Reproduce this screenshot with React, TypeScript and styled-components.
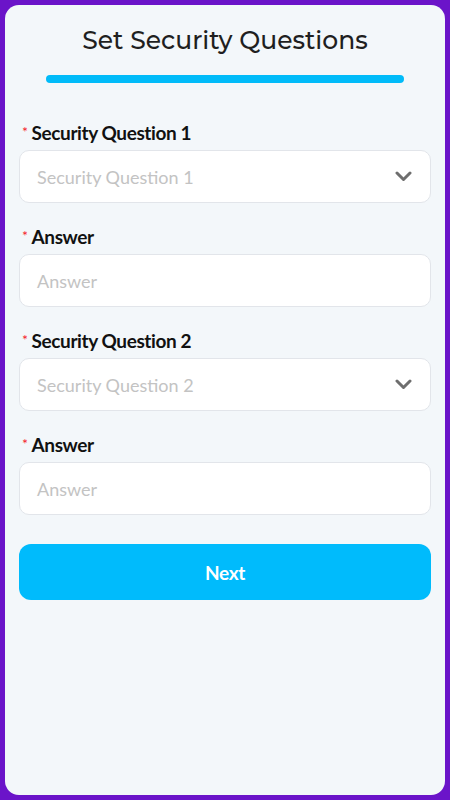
import React from "react";
import styled, { createGlobalStyle } from "styled-components";

const Global = createGlobalStyle`
  html, body { margin: 0; padding: 0; background: #6b14c9; }
  body { font-family: "Lato", "Noto Sans", sans-serif; }
  * { box-sizing: border-box; }
`;

const Frame = styled.div`
  width: 450px;
  height: 800px;
  padding: 5px;
  background: #6b14c9;
`;

const Card = styled.div`
  height: 790px;
  background: #f3f7fa;
  border-radius: 14px;
  padding: 21px 14px 0;
  display: flex;
  flex-direction: column;
`;

const Title = styled.h1`
  margin: 0;
  text-align: center;
  font-family: "Montserrat", "Noto Sans", sans-serif;
  font-weight: 500;
  font-size: 25px;
  line-height: 29px;
  color: #1f1f1f;
`;

const Progress = styled.div`
  width: 358px;
  height: 8px;
  margin: 20px auto 37px;
  border-radius: 4px;
  background: #00bbf9;
`;

const Field = styled.div`
  display: flex;
  flex-direction: column;
  gap: 6px;
  margin-bottom: 21px;
  &:last-of-type { margin-bottom: 29px; }
`;

const Label = styled.label`
  display: flex;
  align-items: center;
  height: 24px;
  padding-left: 3px;
  font-family: "Lato", sans-serif;
  font-weight: 700;
  font-size: 19px;
  letter-spacing: -0.4px;
  color: #111;
`;

const Star = styled.span`
  color: #f5222d;
  font-size: 14px;
  font-weight: 400;
  margin-right: 4px;
  align-self: flex-start;
  margin-top: 3px;
`;

const Box = styled.div`
  height: 53px;
  background: #ffffff;
  border: 1px solid #e2e5ea;
  border-radius: 10px;
  display: flex;
  align-items: center;
  padding: 0 18px 0 17px;
`;

const Placeholder = styled.span`
  flex: 1;
  font-family: "Lato", sans-serif;
  font-size: 18px;
  color: #c3c3c3;
`;

const Chevron = styled.svg`
  width: 17px;
  height: 11px;
`;

const Button = styled.button`
  height: 56px;
  border: none;
  border-radius: 12px;
  background: #00bbfc;
  color: #fff;
  font-family: "Lato", sans-serif;
  font-weight: 700;
  font-size: 19px;
  letter-spacing: -0.3px;
`;

const Select = ({ text }: { text: string }) => (
  <Box>
    <Placeholder>{text}</Placeholder>
    <Chevron viewBox="0 0 17 11">
      <polyline
        points="2,2 8.5,8.5 15,2"
        fill="none"
        stroke="#6e6e6e"
        strokeWidth="3"
        strokeLinecap="round"
        strokeLinejoin="round"
      />
    </Chevron>
  </Box>
);

const Input = ({ text }: { text: string }) => (
  <Box>
    <Placeholder>{text}</Placeholder>
  </Box>
);

export default function App() {
  return (
    <Frame>
      <Global />
      <Card>
        <Title>Set Security Questions</Title>
        <Progress />
        <Field>
          <Label><Star>*</Star>Security Question 1</Label>
          <Select text="Security Question 1" />
        </Field>
        <Field>
          <Label><Star>*</Star>Answer</Label>
          <Input text="Answer" />
        </Field>
        <Field>
          <Label><Star>*</Star>Security Question 2</Label>
          <Select text="Security Question 2" />
        </Field>
        <Field>
          <Label><Star>*</Star>Answer</Label>
          <Input text="Answer" />
        </Field>
        <Button>Next</Button>
      </Card>
    </Frame>
  );
}
